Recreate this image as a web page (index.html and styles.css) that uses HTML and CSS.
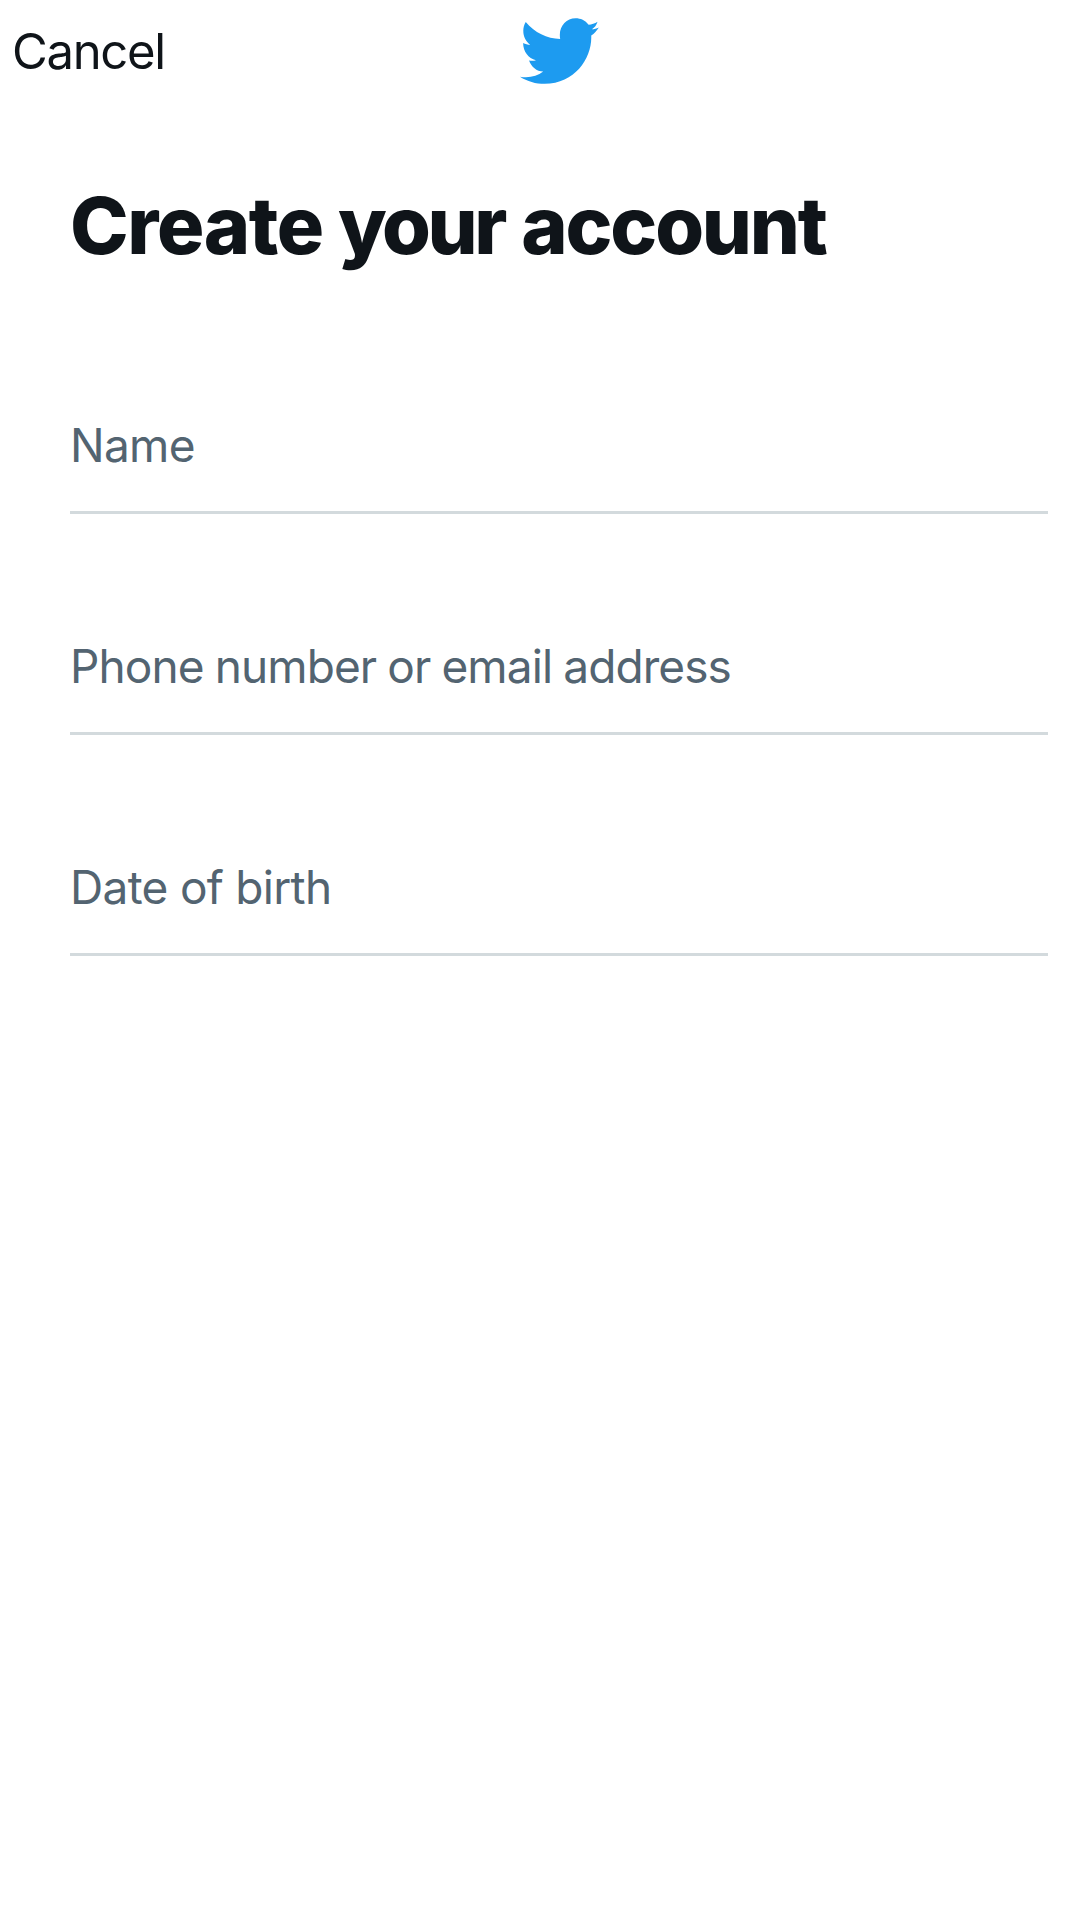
FILE: index.html
```html
<!DOCTYPE html>
<html lang="en">
<head>
<meta charset="utf-8">
<title>Create your account</title>
<link rel="stylesheet" href="styles.css">
</head>
<body>
<header class="topbar">
  <span class="cancel">Cancel</span>
  <svg class="logo" viewBox="0 0 24 20" preserveAspectRatio="none" aria-label="Twitter"><path fill="#1d9bf0" d="M23.95 3.1c-.7.35-1.4.5-2.1.55.8-.45 1.4-1.2 1.7-2.2-.8.5-1.8.8-2.7.9C19.8 1 18.4.4 16.9.4c-2.7 0-4.8 2.2-4.8 4.9 0 .5.03.9.1 1.3C8.2 6.4 4.4 4.7 1.75 1.5c-.5.75-.75 1.7-.75 2.6 0 1.8.8 3.2 2.1 4.2-.75 0-1.5-.2-2.15-.55 0 2.5 1.6 4.6 3.9 5.15-.7.2-1.45.2-2.1.05.65 1.9 2.3 3.2 4.3 3.35C5.2 17.7 2.6 18.3 0 17.8c2.2 1.4 4.8 2.15 7.5 2.15 9.1 0 14.15-7.5 14.15-13.75v-.65c.9-.65 1.7-1.5 2.3-2.45z"/></svg>
</header>
<main class="form">
  <h1 class="title"><span class="title-loose">Create</span> <span class="title-tight">your</span> account</h1>
  <div class="field">Name</div>
  <div class="field field-contact">Phone number or email address</div>
  <div class="field">Date of birth</div>
</main>
</body>
</html>
```
FILE: styles.css
```css
* { box-sizing: border-box; }
body { margin: 0; background: #fff; font-family: Inter, "Liberation Sans", sans-serif; color: #0f1419; }
.topbar { height: 104px; display: grid; grid-template-columns: 508px 79px 1fr; padding-left: 12px; }
.cancel { font-size: 49px; line-height: 104px; letter-spacing: -1.3px; }
.logo { width: 79px; height: 67px; margin-top: 17px; }
.form { padding: 0 32px 0 70px; }
.title { margin: 0; height: 189px; padding-top: 71px; font-size: 79px; line-height: 100px; font-weight: 800; letter-spacing: -2.2px; white-space: nowrap; }
.title-loose { letter-spacing: -1.4px; }
.title-tight { letter-spacing: -3.4px; margin-right: 2px; }
.field { height: 221px; padding-top: 122px; font-size: 46px; line-height: 60px; letter-spacing: -0.7px; color: #536471; border-bottom: 3px solid #d3dadd; white-space: nowrap; }
.field-contact { letter-spacing: -0.9px; word-spacing: -1px; }
```
